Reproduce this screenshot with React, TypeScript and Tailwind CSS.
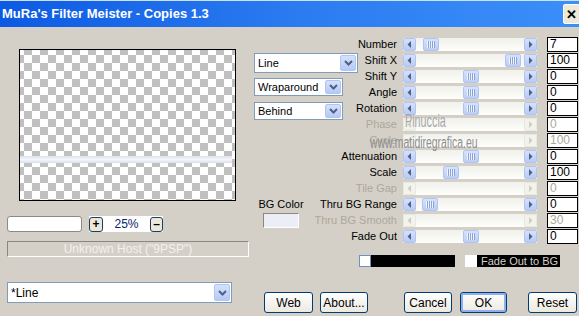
import React from "react"

type Row = {
  label: string
  value: string
  thumb?: number
  disabled?: boolean
}

const rows: Row[] = [
  { label: "Number", value: "7", thumb: 7 },
  { label: "Shift X", value: "100", thumb: 89 },
  { label: "Shift Y", value: "0", thumb: 47 },
  { label: "Angle", value: "0", thumb: 47 },
  { label: "Rotation", value: "0", thumb: 47 },
  { label: "Phase", value: "0", disabled: true },
  { label: "Cycle", value: "100", disabled: true },
  { label: "Attenuation", value: "0", thumb: 47 },
  { label: "Scale", value: "100", thumb: 27 },
  { label: "Tile Gap", value: "0", disabled: true },
  { label: "Thru BG Range", value: "0", thumb: 6 },
  { label: "Thru BG Smooth", value: "30", disabled: true },
  { label: "Fade Out", value: "0", thumb: 47 },
]

function Arrow({ right, disabled }: { right?: boolean; disabled?: boolean }) {
  return (
    <div
      className={
        disabled
          ? "flex h-[13px] w-[13px] shrink-0 items-center justify-center rounded-[2px] border border-[#e8e8e2] bg-[#f3f3ee]"
          : "flex h-[13px] w-[13px] shrink-0 items-center justify-center rounded-[2px] border border-[#b1c5f3] bg-gradient-to-b from-[#d6e1fb] to-[#b8cbf7]"
      }
    >
      <svg width="5" height="7" viewBox="0 0 5 7">
        <path
          d={right ? "M1 0 L4.5 3.5 L1 7Z" : "M4 0 L0.5 3.5 L4 7Z"}
          fill={disabled ? "#cfcdc2" : "#4d6185"}
        />
      </svg>
    </div>
  )
}

function Scroll({ thumb, disabled }: { thumb?: number; disabled?: boolean }) {
  return (
    <div className="ml-[6px] flex h-[13px] w-[134px] items-center bg-gradient-to-b from-[#f1f1ec] to-[#fdfdfb]">
      <Arrow disabled={disabled} />
      <div className="relative h-full flex-1">
        {thumb !== undefined && (
          <div
            className="absolute top-0 flex h-[13px] w-[16px] items-center justify-center rounded-[2px] border border-[#b1c5f3] bg-gradient-to-b from-[#d6e1fb] to-[#bccdf7]"
            style={{ left: thumb }}
          >
            <svg width="8" height="7" viewBox="0 0 8 7">
              <path d="M0.5 0V7M2.5 0V7M4.5 0V7M6.5 0V7" stroke="#eef3fe" strokeWidth="1" />
              <path d="M1.5 0V7M3.5 0V7M5.5 0V7M7.5 0V7" stroke="#8aa3d8" strokeWidth="1" />
            </svg>
          </div>
        )}
      </div>
      <Arrow right disabled={disabled} />
    </div>
  )
}

function Chevron() {
  return (
    <svg width="9" height="6" viewBox="0 0 9 6">
      <path d="M1 1 L4.5 4.5 L8 1" stroke="#4d6185" strokeWidth="2" fill="none" />
    </svg>
  )
}

function Select({ text, className, small }: { text: string; className: string; small?: boolean }) {
  return (
    <div className={"flex items-stretch border border-[#7f9db9] bg-white p-[1px] " + className}>
      <div
        className={
          "flex flex-1 items-center pl-[2px] text-black " + (small ? "text-[11px]" : "text-[12px]")
        }
      >
        {text}
      </div>
      <div className="flex w-[16px] items-center justify-center rounded-[2px] border border-[#b1c5f3] bg-gradient-to-b from-[#d6e1fb] to-[#b6c9f6]">
        <Chevron />
      </div>
    </div>
  )
}

function Button({ text, className, focus }: { text: string; className: string; focus?: boolean }) {
  return (
    <div
      className={
        "flex h-[21px] items-center justify-center rounded-[3px] border border-[#003c74] bg-gradient-to-b from-[#ffffff] to-[#ece9df] text-[12px] text-black " +
        (focus ? "shadow-[inset_0_0_0_2px_#8fb0ec] " : "") +
        className
      }
    >
      {text}
    </div>
  )
}

export default function App() {
  return (
    <div className="relative flex h-[316px] w-[579px] flex-col overflow-hidden bg-[#d4d0c8] font-['Liberation_Sans',Arial,sans-serif]">
      {/* Title bar */}
      <div className="flex h-[27px] items-center border-t border-[#cfe0fb] bg-gradient-to-r from-[#0c5ae3] via-[#2a7bf0] to-[#3b8ff9] pl-[2px]">
        <span className="text-[13px] font-bold text-white">MuRa's Filter Meister - Copies 1.3</span>
        <div className="ml-auto mr-[-1px] flex h-[20px] w-[17px] items-center justify-center rounded-[2px] border border-white bg-[#ece9d8] text-[13px] font-bold leading-none text-black">
          ✕
        </div>
      </div>

      <div className="flex flex-1">
        {/* Left column */}
        <div className="flex w-[250px] flex-col">
          <div className="relative ml-[19px] mt-[22px] h-[152px] w-[217px] border border-black bg-white bg-[repeating-conic-gradient(#c0c0c0_0_25%,#ffffff_0_50%)] bg-size-[16px_16px] bg-position-[-4px_-3px]">
            <div className="absolute left-0 right-[3px] top-[106px] h-[7px] bg-gradient-to-b from-[#dbe2ef] via-[#f4f6fb] to-[#d9dfec]" />
          </div>

          <div className="ml-[7px] mt-[15px] flex items-center">
            <div className="h-[16px] w-[75px] rounded-[3px] border border-[#8a8a8a] bg-white" />
            <div className="ml-[7px] flex h-[16px] items-center bg-white">
              <div className="flex h-[15px] w-[14px] items-center justify-center rounded-[3px] border border-[#1c3c6c] bg-[#ece9d8] text-[12px] font-bold leading-none">
                +
              </div>
              <div className="w-[47px] text-center text-[12px] text-[#0a246a]">25%</div>
              <div className="flex h-[15px] w-[13px] items-center justify-center rounded-[3px] border border-[#1c3c6c] bg-[#ece9d8] text-[12px] font-bold leading-none">
                –
              </div>
            </div>
          </div>

          <div className="ml-[7px] mt-[9px] flex h-[16px] w-[242px] items-center justify-center border border-b-white border-l-[#8a877f] border-r-white border-t-[#8a877f] text-[12px] text-[#f3f2ee]">
            Unknown Host ("9PSP")
          </div>

          <Select text="*Line" className="ml-[7px] mt-[25px] h-[21px] w-[225px]" />
        </div>

        {/* Right area */}
        <div className="flex flex-1 flex-col pl-[4px] pt-[9px]">
          <div className="grid grid-cols-[64px_79px_140px_41px] grid-rows-[repeat(13,16px)]">
            <div className="col-span-2 col-start-1 row-span-6 row-start-1 flex flex-col items-start pt-[17px]">
              <Select text="Line" className="h-[20px] w-[104px]" small />
              <Select text="Wraparound" className="mt-[5px] h-[18px] w-[89px]" small />
              <Select text="Behind" className="mt-[6px] h-[18px] w-[89px]" small />
            </div>

            <div className="col-start-1 row-span-2 row-start-11 flex w-[54px] flex-col items-center">
              <span className="text-[11px] leading-[16px] text-black">BG Color</span>
              <div className="mt-[1px] h-[15px] w-[36px] border border-b-white border-l-[#8a877f] border-r-white border-t-[#8a877f] bg-[#eceef5]" />
            </div>

            {rows.map((r, i) => (
              <React.Fragment key={r.label}>
                <div
                  className={
                    "col-start-2 flex items-center justify-end whitespace-nowrap text-[11px] " +
                    (r.disabled ? "text-[#aca899]" : "text-black")
                  }
                  style={{ gridRow: i + 1 }}
                >
                  {r.label}
                </div>
                <div className="col-start-3 flex items-center" style={{ gridRow: i + 1 }}>
                  <Scroll thumb={r.thumb} disabled={r.disabled} />
                </div>
                <div className="col-start-4 flex items-center" style={{ gridRow: i + 1 }}>
                  <div
                    className={
                      "ml-[10px] flex h-[15px] w-[31px] items-center border border-black bg-white pl-[2px] text-[12px] " +
                      (r.disabled ? "text-[#aca899]" : "text-black")
                    }
                  >
                    {r.value}
                  </div>
                </div>
              </React.Fragment>
            ))}
          </div>

          <div className="ml-[105px] mt-[11px] flex items-center">
            <div className="flex h-[12px] w-[96px] bg-black">
              <div className="h-[12px] w-[12px] border border-[#6f8fc7] bg-white" />
            </div>
            <div className="ml-[10px] h-[12px] w-[12px] bg-white" />
            <div className="flex h-[12px] w-[83px] items-center bg-black pl-[4px] text-[11px] text-[#d4d0c8]">
              Fade Out to BG
            </div>
          </div>

          <div className="mt-[25px] flex items-center">
            <Button text="Web" className="ml-[10px] w-[49px]" />
            <Button text="About..." className="ml-[7px] w-[48px]" />
            <Button text="Cancel" className="ml-[36px] w-[48px]" />
            <Button text="OK" className="ml-[8px] w-[47px]" focus />
            <Button text="Reset" className="ml-[21px] w-[49px]" />
          </div>
        </div>
      </div>

      {/* watermark over the sliders */}
      <div className="pointer-events-none absolute left-[405px] top-[112px] origin-left scale-x-[0.6] text-[18px] leading-[18px] text-[#a9a9a9]">
        Pinuccia
      </div>
      <div className="pointer-events-none absolute left-[370px] top-[135px] origin-left scale-x-[0.65] text-[16px] leading-[16px] text-[#8e8e8e]">
        www.matidiregrafica.eu
      </div>
    </div>
  )
}
